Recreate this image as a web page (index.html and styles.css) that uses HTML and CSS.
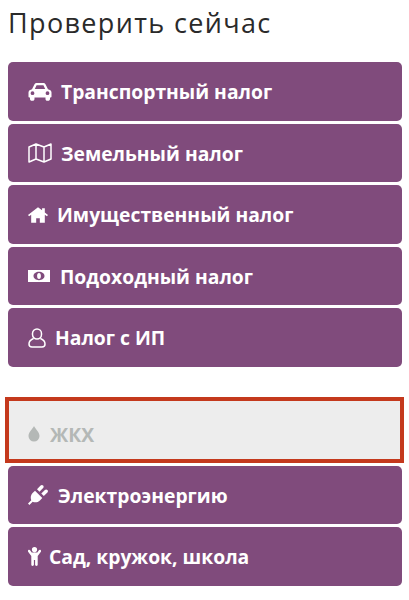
FILE: index.html
```html
<!DOCTYPE html>
<html lang="ru">
<head>
  <meta charset="UTF-8" />
  <meta name="viewport" content="width=device-width, initial-scale=1.0" />
  <title>Проверить сейчас</title>
  <link rel="stylesheet" href="styles.css">
</head>
<body>
  <h1 class="title">Проверить сейчас</h1>
  <div class="group">
    <a class="item">
      <svg class="icon icon-car" viewBox="0 0 24 18"><path fill="currentColor" fill-rule="evenodd" d="M6.500 1.200C7 .5 7.800 0 8.800 0h6.400c1 0 1.800.5 2.300 1.200L20 6.200c1.800.4 3.500 1.300 3.500 3.300v4c0 .6-.4 1-1 1H22v1.500c0 1-.8 1.800-1.800 1.800h-.9c-1 0-1.800-.8-1.800-1.800v-1.500H6.500v1.500c0 1-.8 1.800-1.800 1.800h-.9c-1 0-1.800-.8-1.800-1.800v-1.500h-.5c-.6 0-1-.4-1-1v-4c0-2 1.700-2.900 3.500-3.300zM8.600 2.300 6.800 6h10.400l-1.800-3.700zM4.500 8.300a1.900 1.900 0 1 0 0 3.800 1.900 1.900 0 0 0 0-3.800zm15 0a1.900 1.900 0 1 0 0 3.800 1.900 1.900 0 0 0 0-3.800z"/></svg>
      <span class="gap-car">Транспортный налог</span>
    </a>
    <a class="item">
      <svg class="icon icon-map" viewBox="0 0 24 20"><path fill="none" stroke="currentColor" stroke-width="1.500" stroke-linejoin="round" d="M1 4 8 1l8 3 7-3v15l-7 3-8-3-7 3zM8 1v15M16 4v15"/></svg>
      <span class="gap-map">Земельный налог</span>
    </a>
    <a class="item">
      <svg class="icon icon-home" viewBox="0 0 22 17"><path fill="currentColor" d="M11 0 0 8.600l1.200 1.400L3.500 8.200V17H9v-5h4v5h5.500V8.200l2.300 1.800L22 8.600l-3.500-2.800V1h-3v2.300z"/></svg>
      <span class="gap-home">Имущественный налог</span>
    </a>
    <a class="item">
      <svg class="icon icon-money" viewBox="0 0 22 12"><path fill="currentColor" fill-rule="evenodd" d="M0 0h22v12H0zM11 1.800c-3 0-5.500 1.900-5.500 4.200s2.500 4.200 5.500 4.200 5.500-1.900 5.500-4.200-2.500-4.200-5.500-4.200z"/><ellipse fill="currentColor" cx="11" cy="6" rx="1.900" ry="3"/></svg>
      <span class="gap-money">Подоходный налог</span>
    </a>
    <a class="item">
      <svg class="icon icon-user" viewBox="0 0 18 20"><path fill="none" stroke="currentColor" stroke-width="1.500" d="M9 1a4.500 4.500 0 0 1 4.500 4.500v1a4.500 4.500 0 0 1-9 0v-1A4.500 4.500 0 0 1 9 1zM5.500 10.500C3 11.500 1 13 1 16c0 1.800 1.200 3 3 3h10c1.800 0 3-1.200 3-3 0-3-2-4.500-4.500-5.500"/></svg>
      <span class="gap-user">Налог с ИП</span>
    </a>
  </div>
  <div class="group">
    <a class="item item-active">
      <svg class="icon icon-drop" viewBox="0 0 12 16"><path fill="currentColor" d="M6 0c1 2.600 5.500 6 5.500 10a5.500 5.500 0 0 1-11 0C.5 6 5 2.600 6 0z"/></svg>
      <span class="gap-drop">ЖКХ</span>
    </a>
    <a class="item">
      <svg class="icon icon-plug" viewBox="0 0 20 20"><path fill="currentColor" d="M1.400 20 0 18.600l3.300-3.300C2.300 13 2.700 10 4.600 8.100L7 5.700l7.300 7.300-2.400 2.400c-1.900 1.900-4.900 2.300-7.200 1.300zM9 4.200 12.600.6c.7-.7 1.800-.7 2.500 0s.7 1.800 0 2.500l-3.600 3.600zM13.300 8.500l3.600-3.600c.7-.7 1.800-.7 2.500 0s.7 1.800 0 2.500l-3.600 3.600z"/></svg>
      <span class="gap-plug">Электроэнергию</span>
    </a>
    <a class="item">
      <svg class="icon icon-child" viewBox="0 0 13 19"><path fill="currentColor" d="M6.500 0a2.600 2.600 0 1 1 0 5.200 2.600 2.600 0 0 1 0-5.200zM.4 3c.6-.4 1.300-.3 1.700.3L3.700 5.600h5.600l1.600-2.300c.4-.6 1.100-.7 1.700-.3s.7 1.100.3 1.700L9.700 9v8.800c0 .7-.5 1.200-1.200 1.200s-1.400-.5-1.400-1.200v-4.800H5.900v4.800c0 .7-.7 1.200-1.400 1.200s-1.200-.5-1.200-1.200V9L.1 4.700C-.3 4.100-.2 3.400.4 3z"/></svg>
      <span class="gap-child">Сад, кружок, школа</span>
    </a>
  </div>
</body>
</html>
```

FILE: styles.css
```css
body {
  margin: 0;
  padding: 0 7px 0 8px;
  background-color: #fff;
  font-family: "Open Sans", sans-serif;
}

.title {
  margin: 0 0 22px;
  padding-top: 6px;
  height: 34px;
  font-size: 27px;
  line-height: 34px;
  font-weight: 400;
  letter-spacing: 1.35px;
  color: #2a2a2a;
}

.group {
  display: flex;
  flex-direction: column;
  gap: 3px;
  margin-bottom: 30px;
}

.item {
  display: flex;
  align-items: center;
  box-sizing: border-box;
  height: 58.5px;
  padding: 1px 0 0 20px;
  border-radius: 5px;
  background-color: #804b7c;
  color: #fff;
  font-size: 19.3px;
  font-weight: 700;
}

.item-active {
  height: 66px;
  margin: 0 -2px 0 -3px;
  padding: 9px 0 0 19px;
  border: 4px solid #c4391d;
  border-radius: 0;
  background-color: #ededed;
  color: #b4b8b6;
}

.icon {
  flex-shrink: 0;
  display: block;
}

.icon-car { width: 24px; height: 18px; }
.icon-map { width: 24px; height: 20px; }
.icon-home { width: 20px; height: 16px; }
.icon-money { width: 22px; height: 12px; }
.icon-user { width: 18px; height: 20px; }
.icon-drop { width: 12px; height: 16px; }
.icon-plug { width: 20px; height: 20px; }
.icon-child { width: 13px; height: 19px; }

.gap-car { margin-left: 9px; }
.gap-map { margin-left: 9px; }
.gap-home { margin-left: 9px; }
.gap-money { margin-left: 10px; }
.gap-user { margin-left: 9px; }
.gap-drop { margin-left: 10px; }
.gap-plug { margin-left: 10px; }
.gap-child { margin-left: 8px; }
```
